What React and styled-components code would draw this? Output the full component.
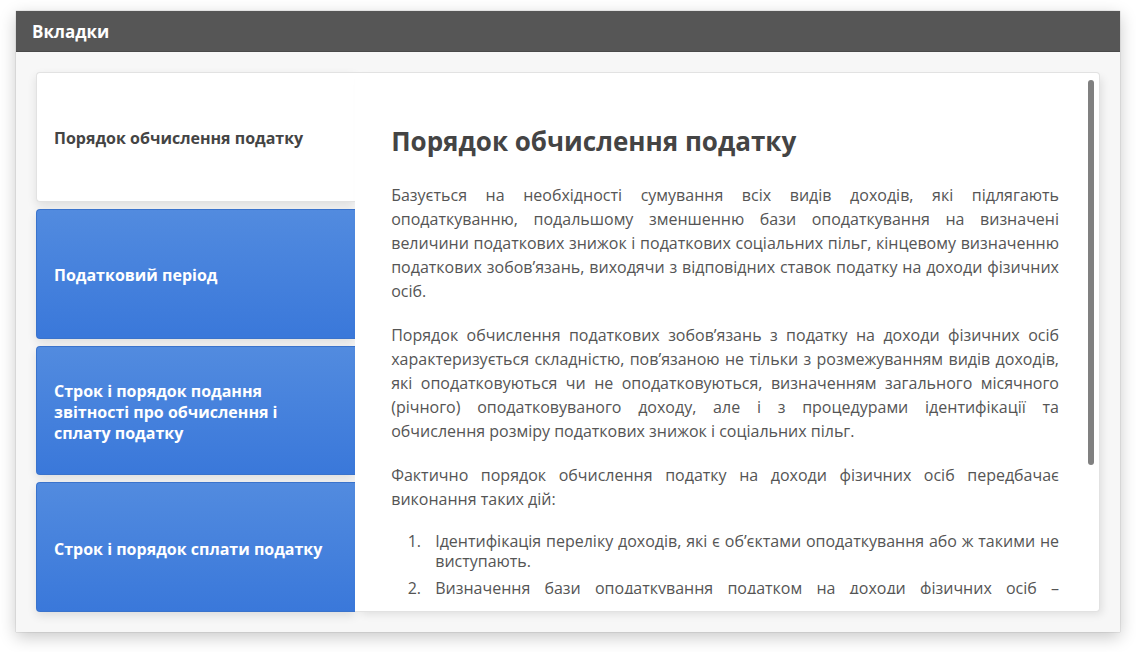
import React from "react";
import styled, { createGlobalStyle } from "styled-components";

const GlobalStyle = createGlobalStyle`
  * { box-sizing: border-box; }
  body {
    margin: 0;
    background: #fff;
    color: #444;
    font-family: "Open Sans", "Noto Sans", sans-serif;
    font-size: 16px;
  }
`;

const Page = styled.main`
  padding: 11px 16px 20px;
`;

const Panel = styled.section`
  background: #f7f7f7;
  box-shadow: 0 0 1px rgba(0, 0, 0, 0.35), 0 5px 16px rgba(0, 0, 0, 0.22);
`;

const PanelHeader = styled.header`
  padding: 9px 16px 7px;
  background: #565656;
  border-bottom: 1px solid #4a4a4a;
`;

const PanelTitle = styled.h2`
  margin: 0;
  color: #fff;
  font-size: 17px;
  font-weight: 700;
  line-height: 24px;
`;

const Tabs = styled.div`
  display: grid;
  grid-template-columns: minmax(0, 3fr) minmax(0, 7fr);
  padding: 20px;
`;

const TabList = styled.div`
  display: flex;
  flex-direction: column;
  gap: 7px;
`;

const Tab = styled.button`
  flex: 1;
  min-height: 128px;
  padding: 4px 28px 0 17px;
  border: 1px solid ${(p) => (p.$active ? "#e2e2e2" : "#3a73cc")};
  border-right: 0;
  border-radius: 4px 0 0 4px;
  background: ${(p) => (p.$active ? "#fff" : "linear-gradient(#528bdf, #3a78da)")};
  box-shadow: 0 4px 10px rgba(0, 0, 0, 0.1);
  color: ${(p) => (p.$active ? "#444" : "#fff")};
  font-family: inherit;
  font-size: 16px;
  font-weight: 700;
  line-height: 21px;
  text-align: left;
  cursor: pointer;
`;

const TabPanel = styled.article`
  position: relative;
  padding: 17px 0;
  border: 1px solid #e2e2e2;
  border-left: 0;
  border-radius: 0 4px 4px 0;
  background: #fff;
  box-shadow: 4px 4px 8px -2px rgba(0, 0, 0, 0.1);
`;

const Scroller = styled.div`
  height: 504px;
  padding: 33px 40px 0 36px;
  overflow-y: auto;
  scrollbar-width: none;
`;

const ScrollThumb = styled.div`
  position: absolute;
  top: 7px;
  right: 5px;
  width: 6px;
  height: 385px;
  border-radius: 3px;
  background: #808080;
`;

const Heading = styled.h1`
  margin: 0 0 24px;
  font-size: 26px;
  font-weight: 700;
  line-height: 36px;
`;

const Paragraph = styled.p`
  margin: 0 0 20px;
  color: #555;
  line-height: 24px;
  text-align: justify;
`;

const Steps = styled.ol`
  margin: 0;
  padding-left: 34px;
  color: #555;
`;

const Step = styled.li`
  margin-bottom: 7px;
  padding-left: 10px;
  line-height: 20px;
  text-align: justify;
  text-align-last: ${(p) => (p.$fill ? "justify" : "auto")};
`;

const tabs = [
  { label: "Порядок обчислення податку", active: true },
  { label: "Податковий період" },
  { label: "Строк і порядок подання звітності про обчислення і сплату податку" },
  { label: "Строк і порядок сплати податку" },
];

export default function App() {
  return (
    <>
      <GlobalStyle />
      <Page>
        <Panel>
          <PanelHeader>
            <PanelTitle>Вкладки</PanelTitle>
          </PanelHeader>
          <Tabs>
            <TabList role="tablist" aria-orientation="vertical">
              {tabs.map((t, i) => (
                <Tab
                  key={t.label}
                  id={`tab-${i}`}
                  type="button"
                  role="tab"
                  aria-selected={!!t.active}
                  $active={t.active}
                >
                  {t.label}
                </Tab>
              ))}
            </TabList>
            <TabPanel role="tabpanel" aria-labelledby="tab-0">
              <Scroller>
                <Heading>Порядок обчислення податку</Heading>
                <Paragraph>
                  Базується на необхідності сумування всіх видів доходів, які підлягають
                  оподаткуванню, подальшому зменшенню бази оподаткування на визначені величини
                  податкових знижок і податкових соціальних пільг, кінцевому визначенню податкових
                  зобов’язань, виходячи з відповідних ставок податку на доходи фізичних осіб.
                </Paragraph>
                <Paragraph>
                  Порядок обчислення податкових зобов’язань з податку на доходи фізичних осіб
                  характеризується складністю, пов’язаною не тільки з розмежуванням видів доходів,
                  які оподатковуються чи не оподатковуються, визначенням загального місячного
                  (річного) оподатковуваного доходу, але і з процедурами ідентифікації та{" "}
                  обчислення&nbsp;розміру податкових знижок і соціальних пільг.
                </Paragraph>
                <Paragraph>
                  Фактично порядок обчислення податку на доходи фізичних осіб передбачає виконання
                  таких дій:
                </Paragraph>
                <Steps>
                  <Step>
                    Ідентифікація переліку доходів, які є об’єктами оподаткування або ж такими не
                    виступають.
                  </Step>
                  <Step $fill>Визначення бази оподаткування податком на доходи фізичних осіб –</Step>
                </Steps>
              </Scroller>
              <ScrollThumb />
            </TabPanel>
          </Tabs>
        </Panel>
      </Page>
    </>
  );
}
